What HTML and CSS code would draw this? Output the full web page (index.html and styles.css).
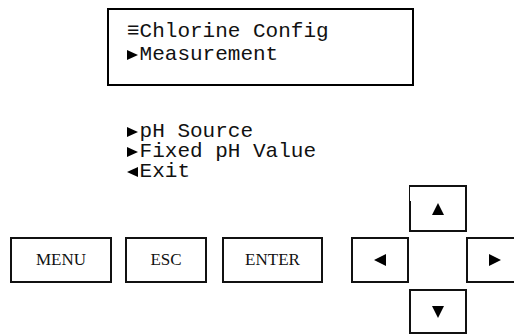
FILE: index.html
```html
<!DOCTYPE html>
<html>
<head>
<meta charset="utf-8">
<link rel="stylesheet" href="styles.css">
</head>
<body>
<div class="page">
  <div class="display">
    <div class="line">≡Chlorine Config</div>
    <div class="line"><svg class="arr" viewBox="0 0 12.6 10"><polygon points="0,0 11,5 0,10"/></svg>Measurement</div>
  </div>
  <div class="menu">
    <div class="line"><svg class="arr" viewBox="0 0 12.6 10"><polygon points="0,0 11,5 0,10"/></svg>pH Source</div>
    <div class="line"><svg class="arr" viewBox="0 0 12.6 10"><polygon points="0,0 11,5 0,10"/></svg>Fixed pH Value</div>
    <div class="line"><svg class="arr" viewBox="0 0 12.6 10"><polygon points="11,0 0,5 11,10"/></svg>Exit</div>
  </div>
  <div class="keys">
    <div class="key k-menu">MENU</div>
    <div class="key k-esc">ESC</div>
    <div class="key k-enter">ENTER</div>
    <div class="key k-up"><svg class="tri" viewBox="0 0 12 12"><polygon points="6,0 12,12 0,12"/></svg></div>
    <div class="key k-left"><svg class="tri" viewBox="0 0 12 12"><polygon points="0,6 12,0 12,12"/></svg></div>
    <div class="key k-right"><svg class="tri" viewBox="0 0 12 12"><polygon points="0,0 12,6 0,12"/></svg></div>
    <div class="key k-down"><svg class="tri" viewBox="0 0 12 12"><polygon points="0,0 12,0 6,12"/></svg></div>
  </div>
</div>
</body>
</html>
```
FILE: styles.css
```css
html, body {
  margin: 0;
  padding: 0;
  background: #fff;
  color: #000;
}
.page {
  width: 514px;
  height: 335px;
  overflow: hidden;
}
.display {
  margin: 8px 0 0 107px;
  width: 307px;
  height: 78px;
  box-sizing: border-box;
  border: 2px solid #000;
  padding: 10px 0 0 18px;
}
.display .line {
  line-height: 23px;
}
.line {
  font-family: "Liberation Mono", "Courier New", monospace;
  font-size: 21px;
  line-height: 20px;
  white-space: pre;
  color: #111;
}
.arr {
  display: inline-block;
  width: 12.6px;
  height: 10px;
  fill: #000;
  vertical-align: baseline;
}
.menu {
  margin: 36px 0 0 127px;
}
.keys {
  margin-top: 3px;
  padding-left: 10px;
  display: grid;
  grid-template-columns: 102px 13px 82px 15px 101px 28px 58px 57px 58px;
  grid-template-rows: 47px 46px 46px;
  row-gap: 5px;
}
.key {
  box-sizing: border-box;
  border: 2px solid #111;
  display: flex;
  align-items: center;
  justify-content: center;
  font-family: "Liberation Serif", "Times New Roman", serif;
  font-size: 17px;
  color: #111;
  background: #fff;
}
.k-menu { grid-column: 1; grid-row: 2; }
.k-esc { grid-column: 3; grid-row: 2; }
.k-enter { grid-column: 5; grid-row: 2; }
.k-left { grid-column: 7; grid-row: 2; }
.k-up {
  grid-column: 8;
  grid-row: 1;
  margin-right: -1px;
  border-left-width: 1px;
  background: linear-gradient(#111, #111) left bottom / 1px 29px no-repeat, #fff;
}
.k-right { grid-column: 9; grid-row: 2; }
.k-down { grid-column: 8; grid-row: 3; margin-top: 1px; margin-right: -1px; }
.tri {
  width: 12px;
  height: 12px;
  fill: #000;
}
```
